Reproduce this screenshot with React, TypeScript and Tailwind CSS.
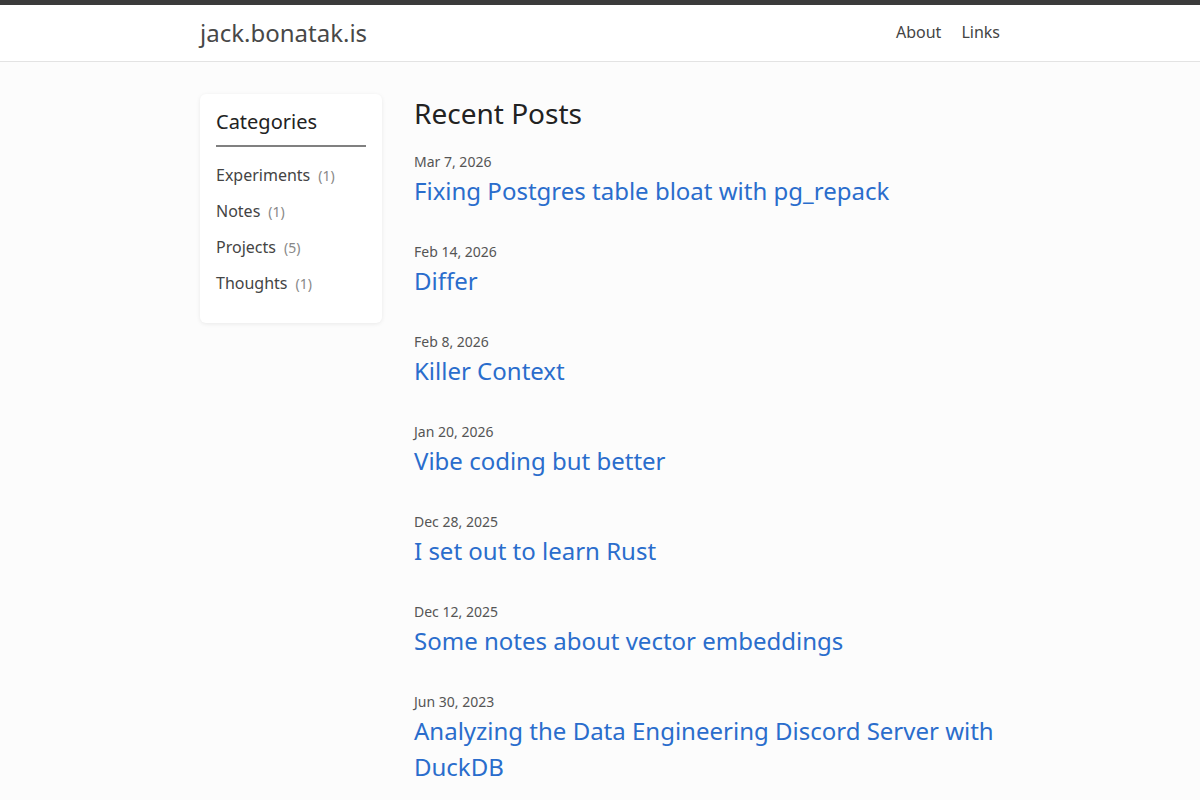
import React from "react";

const categories = [
  { name: "Experiments", count: 1 },
  { name: "Notes", count: 1 },
  { name: "Projects", count: 5 },
  { name: "Thoughts", count: 1 },
];

const posts = [
  { date: "Mar 7, 2026", title: "Fixing Postgres table bloat with pg_repack" },
  { date: "Feb 14, 2026", title: "Differ" },
  { date: "Feb 8, 2026", title: "Killer Context" },
  { date: "Jan 20, 2026", title: "Vibe coding but better" },
  { date: "Dec 28, 2025", title: "I set out to learn Rust" },
  { date: "Dec 12, 2025", title: "Some notes about vector embeddings" },
  { date: "Jun 30, 2023", title: "Analyzing the Data Engineering Discord Server with DuckDB" },
];

export default function App() {
  return (
    <div
      className="min-h-screen bg-[#fcfcfc] text-[#444]"
      style={{ fontFamily: '"Noto Sans", "Open Sans", sans-serif' }}
    >
      <div className="h-[5px] bg-[#3b3b3b]" />
      <header className="bg-white border-b border-[#e3e3e3]">
        <div className="mx-auto w-[800px] h-[56px] flex items-center justify-between">
          <a className="text-[24px] leading-none text-[#484848]">jack.bonatak.is</a>
          <nav className="flex items-center gap-[20px] text-[16px] leading-[24px] text-[#444] pb-[2px]">
            <a>About</a>
            <a>Links</a>
          </nav>
        </div>
      </header>

      <main className="mx-auto w-[800px] pt-[32px] flex items-start gap-[32px]">
        <aside className="w-[182px] shrink-0 bg-white rounded-[6px] shadow-[0_1px_4px_rgba(0,0,0,0.08)] px-[16px] pt-[16px] pb-[28px]">
          <h2 className="text-[20px] leading-[24px] text-[#222] pb-[11px] border-b-2 border-[#808080]">
            Categories
          </h2>
          <ul className="mt-[16px] flex flex-col gap-[12px]">
            {categories.map((c) => (
              <li key={c.name} className="h-[24px] text-[16px] leading-[24px] text-[#444]">
                <span>{c.name}</span>
                <span className="ml-[8px] text-[14px] leading-[24px] text-[#888]">({c.count})</span>
              </li>
            ))}
          </ul>
        </aside>

        <section className="flex-1">
          <h1 className="text-[28px] leading-[38px] text-[#222] mb-[19px]">Recent Posts</h1>
          <div className="flex flex-col gap-[32px]">
            {posts.map((p) => (
              <article key={p.title}>
                <div className="text-[14px] leading-[21px] text-[#555]">{p.date}</div>
                <a className="block mt-[1px] text-[24px] leading-[36px] text-[#2a6dcc]">{p.title}</a>
              </article>
            ))}
          </div>
        </section>
      </main>
    </div>
  );
}
